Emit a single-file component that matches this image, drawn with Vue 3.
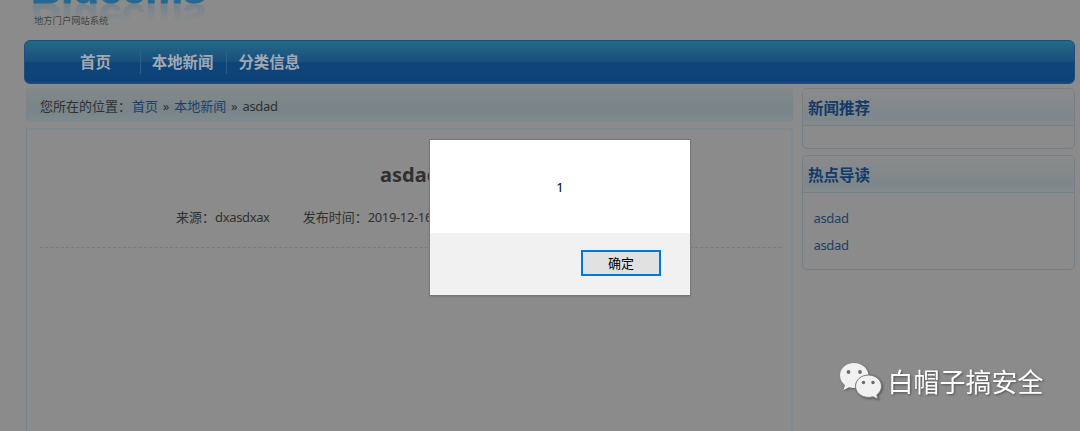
<script setup>
const nav = ['首页', '本地新闻', '分类信息']
const hot = ['asdad', 'asdad']
</script>

<template>
  <div class="page">
    <header class="brand">
      <div class="logo">Bluecms</div>
      <div class="logo mirror" aria-hidden="true">Bluecms</div>
      <div class="tagline">地方门户网站系统</div>
    </header>
    <nav class="nav"><a v-for="n in nav" :key="n">{{ n }}</a></nav>
    <div class="columns">
      <main>
        <div class="crumb">您所在的位置：<a>首页</a><i>»</i><a>本地新闻</a><i>»</i><span class="latin">asdad</span></div>
        <article>
          <h1>asdad</h1>
          <div class="meta"><span>来源：<span class="latin">dxasdxax</span></span><span>发布时间：<span class="latin">2019-12-16</span></span></div>
          <svg class="rule" width="742" height="1"><line x1="0" y1=".5" x2="742" y2=".5" /></svg>
        </article>
      </main>
      <aside>
        <section class="card"><h2>新闻推荐</h2><div class="empty"></div></section>
        <section class="card"><h2>热点导读</h2><ul><li v-for="(h, i) in hot" :key="i" class="latin">{{ h }}</li></ul></section>
      </aside>
    </div>
    <div class="dialog">
      <div class="message">1</div>
      <div class="actions"><button>确定</button></div>
    </div>
    <div class="watermark">
      <svg width="44" height="40" viewBox="0 0 44 40">
        <path d="M15 1C7 1 1 6.500 1 13.500c0 4 2 7.500 5 9.800L4.500 28l5.700-2.800c1.500.5 3.200.7 4.800.7 8 0 14.500-5.500 14.500-12.400S23 1 15 1Z" />
        <circle cx="9.500" cy="10" r="1.900" class="eye" /><circle cx="21" cy="10" r="1.900" class="eye" />
        <path class="front" d="M29.500 13c-7.300 0-13 5-13 11.200s5.700 11.200 13 11.200c1.500 0 3-.2 4.300-.6L39 37l-1.200-4.200c3-2 4.700-5.200 4.700-8.600C42.500 18 36.800 13 29.500 13Z" />
        <circle cx="24.500" cy="20.500" r="1.700" class="eye" /><circle cx="34" cy="20.500" r="1.700" class="eye" />
      </svg>
      <span>白帽子搞安全</span>
    </div>
  </div>
</template>

<style>
body { margin: 0; overflow: hidden; background: #8b8b8b; }
</style>
<style scoped>
* { box-sizing: border-box; }
.page { position: relative; height: 431px; overflow: hidden; background: #8b8b8b; color: #303030; font: 13px/18px "Noto Sans", "Noto Sans CJK SC", sans-serif; }
.brand { position: relative; height: 40px; overflow: hidden; }
.logo { position: absolute; left: 31px; top: -39px; width: 178px; font: bold 42px/56px "Liberation Sans", sans-serif; color: #286890; white-space: nowrap; -webkit-text-stroke: 1px #286890; }
.mirror { top: -10px; transform: scaleY(-1); opacity: .3; -webkit-mask-image: linear-gradient(transparent 45%, #000 85%); mask-image: linear-gradient(transparent 45%, #000 85%); }
.tagline { position: absolute; left: 34px; top: 14px; font: 9.300px/13px "Noto Sans CJK SC", sans-serif; color: #444; }
.nav { display: flex; align-items: center; margin-left: 24px; width: 1051px; height: 44px; padding-left: 44px; border: 1px solid #234b7b; border-radius: 6px; background: linear-gradient(#236b86 0, #205e82 20%, #194f7d 48%, #0d457a 52%, #0d4279 95%, #17497f); }
.nav a { height: 24px; padding: 0 13px 0 11px; line-height: 25px; font-size: 15.400px; font-weight: bold; color: #a2a8b2; border-right: 1px solid #29618d; white-space: nowrap; }
.nav a:first-child { padding-right: 29px; }
.nav a:last-child { border: 0; }
.columns { display: flex; padding: 4px 0 0 26px; gap: 9px; }
main { width: 767px; }
.crumb { height: 34px; padding-left: 14px; line-height: 36px; background: linear-gradient(#838989, #788489 65%, #808a8f); white-space: nowrap; }
.crumb a, li { color: #203f67; }
.crumb a:first-of-type { margin-left: 1px; }
.crumb i { font-style: normal; margin: 0 4.800px; }
.latin { letter-spacing: -.35px; }
article { height: 310px; margin-top: 6px; border: 1px solid #75848b; border-right: 2px solid #808890; border-top: 2px solid #808890; padding: 31px 13px 0; }
h1 { margin: 0; padding-left: 340px; font: bold 20px/28px "Noto Sans", sans-serif; }
.meta { display: flex; gap: 33px; margin: 19px 0 0 136px; white-space: nowrap; }
.rule { display: block; margin-top: 21px; stroke: #767c7f; stroke-dasharray: 3 2.200; }
aside { width: 273px; }
.card { border: 1px solid #748086; border-radius: 5px; margin-bottom: 6px; overflow: hidden; }
h2 { margin: 0; height: 37px; padding-left: 5px; border-bottom: 1px solid #748086; font: bold 15.500px/36px "Noto Sans CJK SC", sans-serif; color: #143a68; background: linear-gradient(#8b8b8b, #7e878c 75%, #858a8d); }
.empty { height: 22px; }
ul { list-style: none; margin: 0; padding: 12px 0 10px 10.500px; }
li { height: 27px; line-height: 27px; }
.dialog { position: absolute; left: 430px; top: 140px; width: 260px; height: 155px; background: #fff; box-shadow: 0 0 0 1px #777, 0 1px 2px #666; }
.message { height: 93px; padding-top: 37px; text-align: center; color: #000; line-height: 20px; }
.actions { height: 62px; padding: 17px 29px; background: #f1f1f1; display: flex; justify-content: flex-end; }
button { width: 80px; height: 26px; padding: 0; border: 2px solid #0078d7; background: #e1e1e1; color: #000; font: 13px/20px "Noto Sans CJK SC", sans-serif; }
.watermark { position: absolute; left: 838.500px; top: 362px; display: flex; filter: drop-shadow(1px 1px 1px #555); }
.watermark path { fill: #f1f1f1; }
.watermark .front { stroke: #777; stroke-width: 1; }
.watermark .eye { fill: #6b6b6b; }
.watermark span { margin-left: 5px; font: 26px/38px "Noto Sans CJK SC", sans-serif; font-weight: 400; color: #fff; white-space: nowrap; }
</style>
